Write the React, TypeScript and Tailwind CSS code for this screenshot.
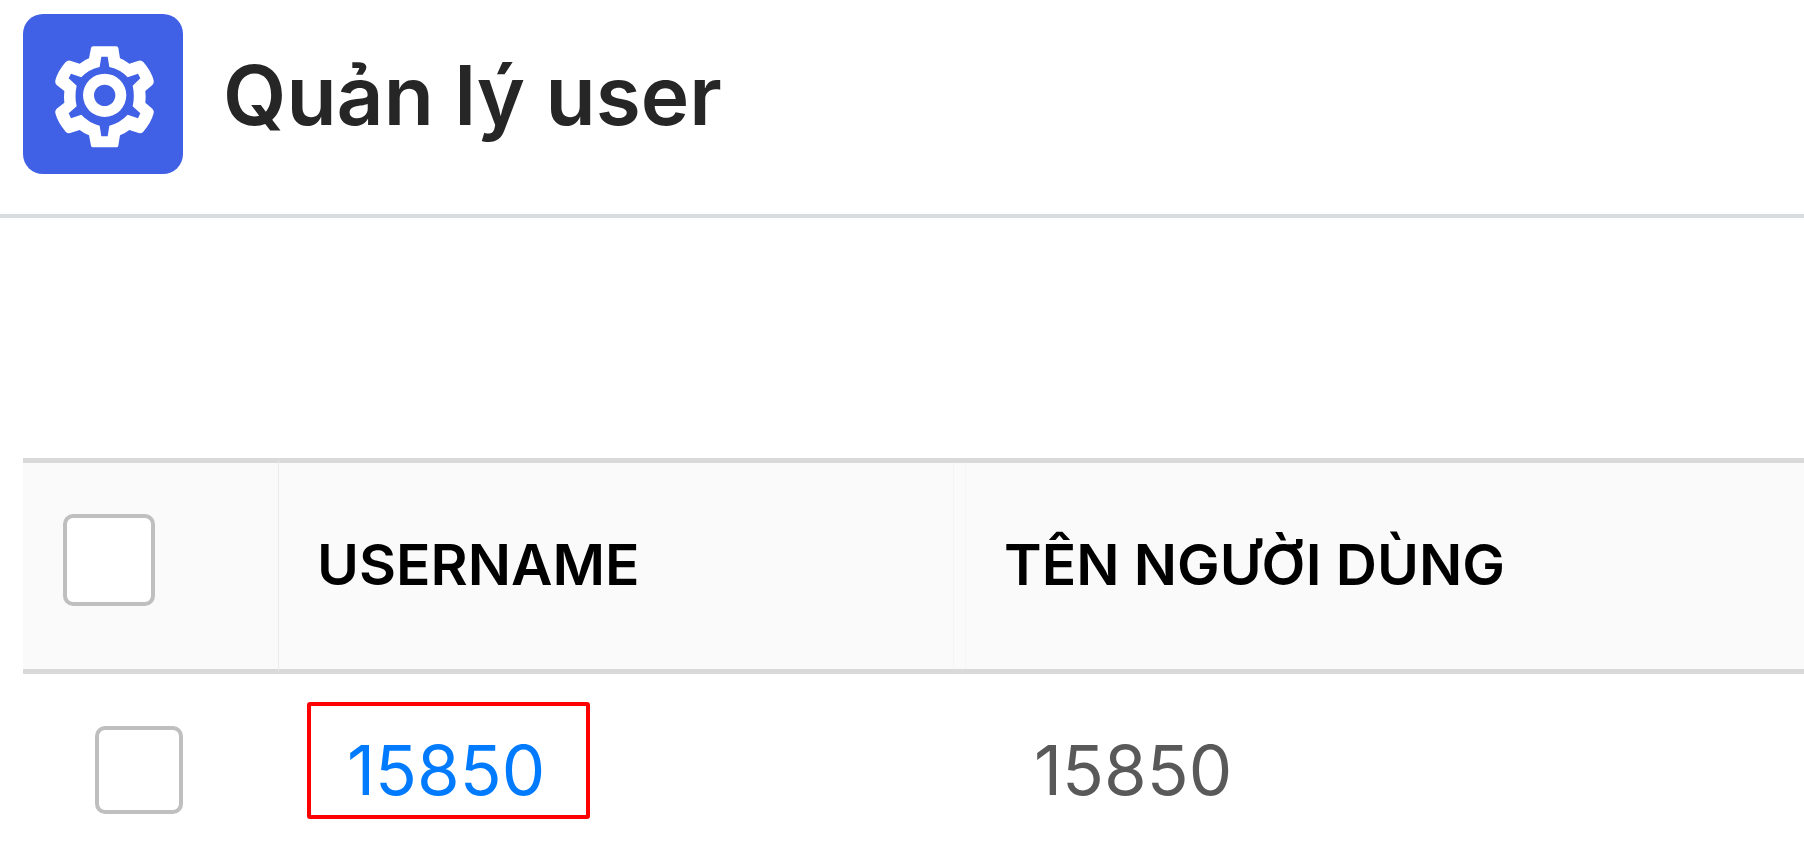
function GearIcon() {
  return (
    <svg viewBox="2 0 480 480" className="size-full" fill="#fff" fillRule="evenodd" aria-hidden="true">
      <path d="M212 97h70q5 0 6 5l5 31q14 5 28 16l28-9q8-2 14 4q23 26 31 55q2 9-4 14l-21 18q2 17 0 35l21 18q6 6 4 14q-8 29-31 55q-6 6-14 4l-28-9q-14 11-28 16l-5 31q-1 5-6 5h-70q-5 0-6-5l-6-31q-14-5-28-16l-28 9q-8 2-14-4q-23-26-31-55q-2-8 4-14l23-18q-2-18 0-35l-23-18q-6-5-4-14q8-29 31-55q6-6 14-4l28 9q14-11 28-16l6-31q1-5 6-5z M237 128l-5 31q-33 7-55 31l-31-11l-7 14l24 22q-7 31 0 62l-24 21l7 15l31-11q22 24 55 33l5 32h19l5-32q33-9 55-33l31 11l7-15l-23-21q7-31 0-62l23-22l-7-14l-31 11q-22-24-55-31l-5-31z" />
      <path d="M247 179a65 65 0 1 0 0 130a65 65 0 1 0 0-130z M247 212a32 32 0 1 1 0 64a32 32 0 1 1 0-64z" />
    </svg>
  );
}

const checkboxStyle =
  "block appearance-none rounded-[10px] border-4 border-[#bfbfbf] bg-white checked:bg-[#007bff]";
const headStyle = "border-y-5 border-y-[#d9d9d9] bg-[#fafafa] text-left align-middle font-semibold";

const users = [{ username: "15850", name: "15850" }];

export default function App() {
  return (
    <div className="min-h-screen bg-white font-['Inter',sans-serif]">
      <header className="flex items-center gap-10 border-b-4 border-[#d8dcde] pt-[14px] pb-10 pl-[23px]">
        <div className="size-40 shrink-0 overflow-hidden rounded-[20px] bg-[#4060e6]">
          <GearIcon />
        </div>
        <h1 className="pt-1 text-[82px] leading-none font-semibold whitespace-nowrap text-[#262626]">Quản lý user</h1>
      </header>

      <main className="pt-60 pl-[23px]">
        <table className="w-full table-fixed border-separate border-spacing-0">
          <colgroup>
            <col className="w-64" />
            <col className="w-[687px]" />
            <col />
          </colgroup>
          <thead>
            <tr className="h-[216px] text-[57px] leading-none text-black">
              <th scope="col" className={`${headStyle} border-r border-r-[#ebebeb] pb-3 pl-10`}>
                <input type="checkbox" aria-label="Select all" className={`${checkboxStyle} size-[92px]`} />
              </th>
              <th scope="col" className={`${headStyle} relative pb-1 pl-[38px]`}>
                USERNAME
                <span className="absolute inset-y-0 right-0 w-[13px] border-x border-[#f5f5f5]" />
              </th>
              <th scope="col" className={`${headStyle} pb-1 pl-[38px] whitespace-nowrap`}>
                TÊN NGƯỜI DÙNG
              </th>
            </tr>
          </thead>
          <tbody>
            {users.map((user) => (
              <tr key={user.username} className="align-top text-[69px] leading-none">
                <td className="pt-13 pl-[72px]">
                  <input type="checkbox" aria-label={user.username} className={`${checkboxStyle} size-[88px]`} />
                </td>
                <td className="pt-7 pl-7">
                  <a
                    href="#user"
                    className="flex h-[117px] w-[283px] items-center rounded-[3px] border-4 border-[#ff0000] pt-5 pl-9 text-[#007bff]"
                  >
                    {user.username}
                  </a>
                </td>
                <td className="pt-[62px] pl-[68px] text-[#595959]">{user.name}</td>
              </tr>
            ))}
          </tbody>
        </table>
      </main>
    </div>
  );
}
